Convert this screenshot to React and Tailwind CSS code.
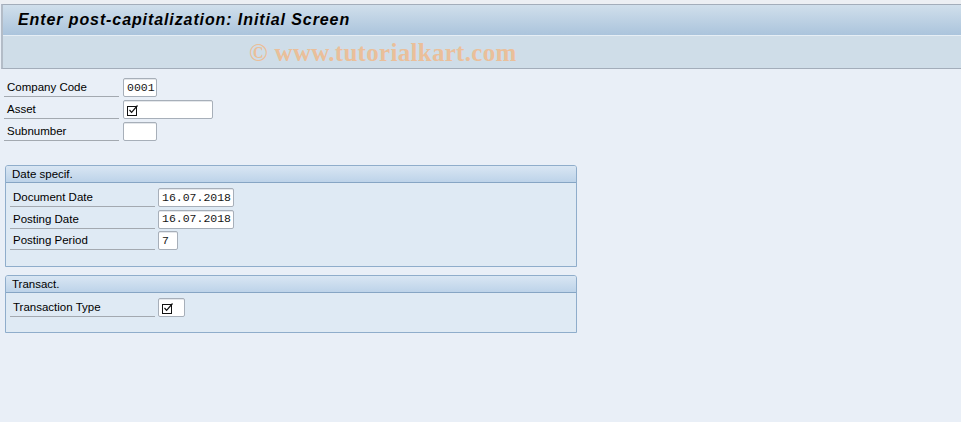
import React from 'react';

// SAP-like initial screen: post-capitalization

const CheckIcon = () => (
  <svg width="12" height="12" viewBox="0 0 12 12" className="block">
    <rect x="0.5" y="2.5" width="9" height="9" fill="none" stroke="#111" strokeWidth="1" />
    <path d="M2.5 6 L4.6 8.4 L10.5 1.5" fill="none" stroke="#111" strokeWidth="1.2" />
  </svg>
);

function Field({ value, width, check }) {
  return (
    <div
      className={`h-[19px] ${width} bg-white border border-[#a7afb9] rounded-[2px] shadow-[inset_0_1px_0_#e4e7eb] flex items-center px-[3px] text-[11.5px] text-[#151515]`}
      style={{ fontFamily: '"Liberation Mono", "DejaVu Sans Mono", monospace' }}
    >
      {check ? <CheckIcon /> : value}
    </div>
  );
}

function Row({ label, labelW, gap, children }) {
  return (
    <div className="flex items-start h-[19px]">
      <div className={`${labelW} h-[19px] border-b border-[#a3a9b0] pl-[3px] leading-[19px] text-[11.5px] text-black`}>
        {label}
      </div>
      <div className={gap}>{children}</div>
    </div>
  );
}

function Group({ title, bodyH, children }) {
  return (
    <div className="w-[572px] border border-[#8fadcb] rounded-t-[3px] bg-[#dfeaf4]">
      <div className="h-[17px] border-b border-[#86a5c4] bg-gradient-to-b from-[#d9e6f3] to-[#bdd3e9] rounded-t-[2px] pl-[6px] leading-[16px] text-[11.5px] text-black">
        {title}
      </div>
      <div className={`${bodyH} pt-[5px] pl-[4px] flex flex-col gap-[2.5px]`}>{children}</div>
    </div>
  );
}

export default function App() {
  return (
    <div
      className="w-[961px] h-[422px] bg-[#e9eff7] overflow-hidden"
      style={{ fontFamily: '"Liberation Sans", Arial, sans-serif' }}
    >
      {/* header */}
      <div className="h-[4px] bg-[#eceff3]" />
      <div className="border-t border-b border-[#a3adba] ml-[1px] border-l-2 border-l-[#b3bcc7]">
        <div className="h-[30px] bg-gradient-to-b from-[#d0dfeb] to-[#abc4dc] pl-[15px] flex items-center">
          <span className="text-[16px] font-bold italic tracking-[0.9px] text-black">
            Enter post-capitalization: Initial Screen
          </span>
        </div>
        <div className="h-[1px] bg-[#e6eef5]" />
        <div className="h-[32px] bg-[#cfdde8] pl-[246px] flex items-center">
          <span
            className="text-[25px] font-bold text-[#eabf9a] tracking-[0.3px] pt-[1px]"
            style={{ fontFamily: '"Liberation Serif", "Times New Roman", serif' }}
          >
            © www.tutorialkart.com
          </span>
        </div>
      </div>

      {/* main fields */}
      <div className="pt-[9px] pl-[4px] flex flex-col gap-[3px]">
        <Row label="Company Code" labelW="w-[115px]" gap="ml-[4px]">
          <Field value="0001" width="w-[34px]" />
        </Row>
        <Row label="Asset" labelW="w-[115px]" gap="ml-[4px]">
          <Field check width="w-[90px]" />
        </Row>
        <Row label="Subnumber" labelW="w-[115px]" gap="ml-[4px]">
          <Field value="" width="w-[34px]" />
        </Row>
      </div>

      <div className="pl-[5px] pt-[24px] flex flex-col gap-[8px]">
        <Group title="Date specif." bodyH="h-[83px]">
          <Row label="Document Date" labelW="w-[145px]" gap="ml-[3px]">
            <Field value="16.07.2018" width="w-[76px]" />
          </Row>
          <Row label="Posting Date" labelW="w-[145px]" gap="ml-[3px]">
            <Field value="16.07.2018" width="w-[76px]" />
          </Row>
          <Row label="Posting Period" labelW="w-[145px]" gap="ml-[3px]">
            <Field value="7" width="w-[20px]" />
          </Row>
        </Group>
        <Group title="Transact." bodyH="h-[39px]">
          <Row label="Transaction Type" labelW="w-[145px]" gap="ml-[3px]">
            <Field check width="w-[27px]" />
          </Row>
        </Group>
      </div>
    </div>
  );
}
